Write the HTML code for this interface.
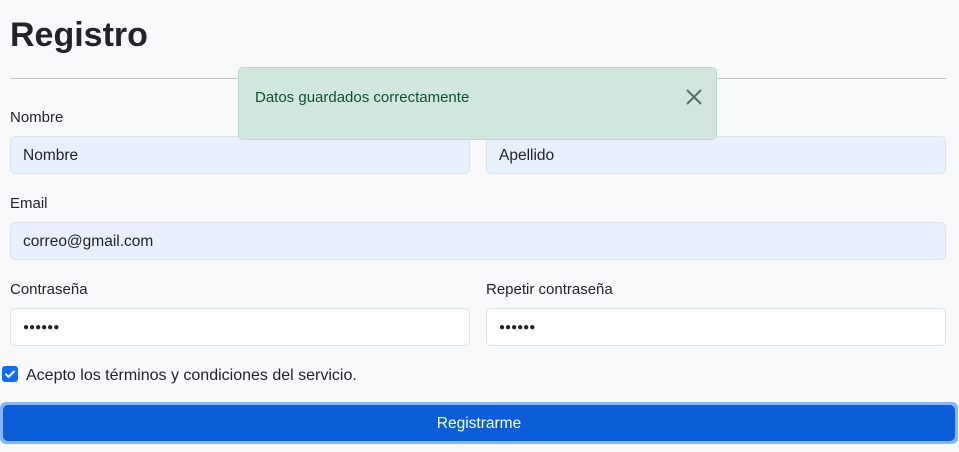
<!DOCTYPE html>
<html><head><meta charset="utf-8"><style>
body{margin:0;width:959px;height:452px;background:#f8f9fa;font-family:"Liberation Sans",sans-serif;color:#212529;position:relative;overflow:hidden}
.a{position:absolute}
h1{position:absolute;left:10px;top:13px;margin:0;font-size:34px;font-weight:600;line-height:44px}
.hr{left:10px;top:78px;width:936px;height:1px;background:#c4c6c8}
.lbl{font-size:15px;line-height:20px}
.in{background:#fff;border:1px solid #dee2e6;border-radius:5px;box-sizing:border-box;height:38px;font-size:15.5px;padding-left:12px;line-height:38px}
.f{background:#e8f0fe}
.pw{font-size:10px;letter-spacing:0px}
</style></head><body>
<h1>Registro</h1>
<div class="a hr"></div>
<div class="a lbl" style="left:10px;top:108px">Nombre</div>
<div class="a in f" style="left:10px;top:136px;width:460px">Nombre</div>
<div class="a in f" style="left:486px;top:136px;width:460px">Apellido</div>
<div class="a lbl" style="left:10px;top:194px">Email</div>
<div class="a in f" style="left:10px;top:222px;width:936px">correo@gmail.com</div>
<div class="a lbl" style="left:10px;top:280px">Contraseña</div>
<div class="a lbl" style="left:486px;top:280px">Repetir contraseña</div>
<div class="a in pw" style="left:10px;top:308px;width:460px">●●●●●●</div>
<div class="a in pw" style="left:486px;top:308px;width:460px">●●●●●●</div>
<div class="a" style="left:2px;top:366px;width:16px;height:16px;background:#0d6efd;border-radius:3px"><svg width="16" height="16" viewBox="0 0 16 16"><path d="M4 8.3l2.6 2.5L12 5.5" fill="none" stroke="#fff" stroke-width="2" stroke-linecap="round" stroke-linejoin="round"/></svg></div>
<div class="a" style="left:26px;top:366px;font-size:16px;line-height:20px">Acepto los términos y condiciones del servicio.</div>
<div class="a" style="left:0;top:402px;width:958px;height:42px;background:#86b7fe;border-radius:6px"></div>
<div class="a" style="left:3px;top:405px;width:952px;height:36px;background:#0b5ed7;border-radius:5px;color:#fff;font-size:15.5px;line-height:38px;text-align:center">Registrarme</div>
<div class="a" style="left:238px;top:67px;width:479px;height:73px;background:#d1e7dd;border:1px solid #badbcc;border-radius:5px;box-sizing:border-box">
<div class="a" style="left:16px;top:20px;color:#0f5132;font-size:15px;line-height:20px">Datos guardados correctamente</div>
<svg class="a" style="left:446px;top:20px" width="18" height="18" viewBox="0 0 18 18"><path d="M2 2L16 16M16 2L2 16" stroke="#5c6b64" stroke-width="2"/></svg>
</div>
</body></html>
